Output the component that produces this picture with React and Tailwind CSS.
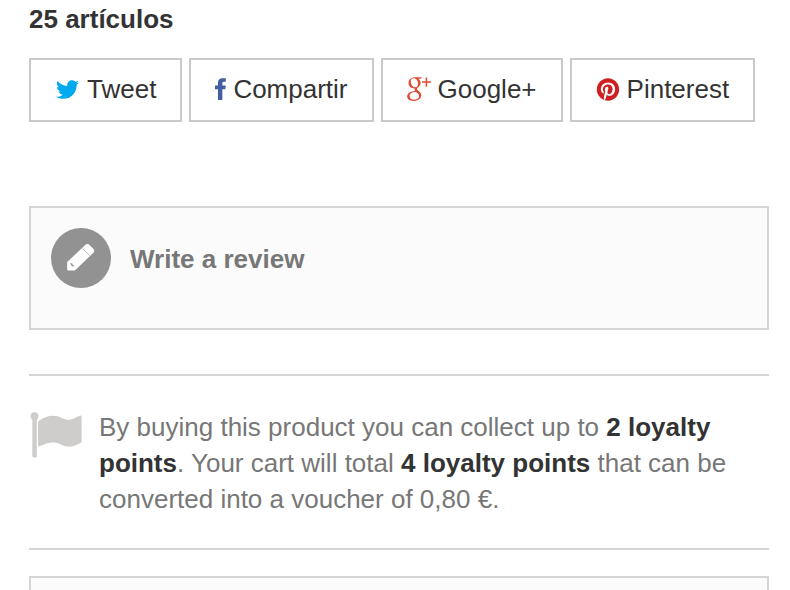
import { FaPinterest, FaTwitter } from 'react-icons/fa'

function FacebookIcon({ className }) {
  return (
    <svg viewBox="0 0 12 24" className={className} fill="currentColor" aria-hidden>
      <path d="M11.8 0.2V4H9.6Q8 4 8 5.6V8.2H11.7L11.3 12.2H8V24H3.2V12.2H0V8.2H3.2V5.4Q3.2 0.2 8.4 0.2Z" />
    </svg>
  )
}

function GooglePlusIcon({ className }) {
  return (
    <svg viewBox="0 0 25 26" className={className} aria-hidden>
      <g fill="currentColor" fillRule="evenodd">
        <path d="M8.4 0.8H15.6L14 2.2H11.8C13.4 3.4 14.2 5 14.2 6.8C14.2 8.8 13.2 10 12 11C10.8 12 10.4 12.4 10.4 13C10.4 13.7 11.2 14.3 12.2 15.1C13.8 16.4 14.8 17.6 14.8 19.4C14.8 22.8 11.6 25.4 6.8 25.4C2.8 25.4 0.2 23.6 0.2 20.8C0.2 17.4 3.6 15.2 8.6 15C8 14.2 7.8 13.4 8.2 12.4C4.4 12.8 1.6 10.2 1.6 6.8C1.6 3.4 4.4 0.8 8.4 0.8ZM7 1.9C5 1.9 3.9 3.4 4 5.8C4.2 8.8 6 11.3 8.4 11.3C10.4 11.3 11.7 9.8 11.6 7.4C11.4 4.2 9.4 1.9 7 1.9ZM9.4 16C5.4 16 2.7 17.6 2.7 20.2C2.7 22.5 4.7 24.1 7.8 24.1C10.8 24.1 12.6 22.6 12.6 20.4C12.6 18.6 11.6 17.6 9.4 16Z" />
        <path d="M19.4 1H21V5H25V6.6H21V10.6H19.4V6.6H15.6V5H19.4Z" />
      </g>
    </svg>
  )
}

function PencilIcon({ className }) {
  return (
    <svg viewBox="0 0 28 28" className={className} aria-hidden>
      <path
        d="M0.2 18L18.8 0.6Q20.4 -0.8 22.2 0.8L26.4 4.8Q28 6.6 26.6 8.6L8.4 26Q8 26.4 7.2 26.4H1Q0.2 26.4 0.2 25.6Z"
        fill="currentColor"
      />
      <path d="M15.6 4.6L22.6 11.6" stroke="#929292" strokeWidth="0.6" />
      <path d="M3.4 19.6L5 20.2L5 21.6L6.8 22.2" fill="none" stroke="#929292" strokeWidth="1.3" />
    </svg>
  )
}

function FlagIcon({ className }) {
  return (
    <svg viewBox="0 0 52 46" className={className} fill="currentColor" aria-hidden>
      <circle cx="4.5" cy="4.2" r="3.9" />
      <rect x="2.3" y="4" width="4.5" height="41.6" rx="1.5" />
      <path d="M8 10.5Q8 9.2 9.2 8.4C17 3.8 24 1.8 33 6.4C39 9.2 42 7.4 49.6 3.8Q51.6 3 51.6 5V29Q51.6 30.4 50.4 31C43 35 38 36 31 32.4C23 28.6 17 31 10 34Q8 34.8 8 33Z" />
    </svg>
  )
}

const redes = [
  { id: 'twitter', label: 'Tweet', icon: <FaTwitter className="h-[23px] w-[25px] text-[#00aaf0]" /> },
  { id: 'facebook', label: 'Compartir', icon: <FacebookIcon className="h-6 w-[11px] overflow-visible text-[#435f9f]" /> },
  { id: 'google', label: 'Google+', icon: <GooglePlusIcon className="h-[26px] w-6 text-[#e04b34]" /> },
  { id: 'pinterest', label: 'Pinterest', icon: <FaPinterest className="h-[23px] w-6 text-[#ce1f21]" /> },
]

export default function App() {
  return (
    <main className="bg-white pr-[21px] pl-[29px] font-['Liberation_Sans',Arial,sans-serif] text-[26px] leading-9 text-[#777777]">
      <p className="pt-px font-bold text-[#333333]">25 artículos</p>

      <div className="mt-[21px] flex flex-wrap gap-[7px]">
        {redes.map((red) => (
          <button
            key={red.id}
            type="button"
            className="flex h-16 items-center gap-[7px] border-2 border-[#c9c9c9] bg-white px-6 pb-0.5 text-[#333333]"
          >
            {red.icon}
            {red.label}
          </button>
        ))}
      </div>

      <section className="mt-21 border-2 border-[#d6d4d4] bg-[#fbfbfb] px-5 pt-5 pb-10">
        <a href="#review" className="flex items-center gap-[19px] font-bold">
          <span className="flex h-15 w-15 shrink-0 items-center justify-center rounded-full bg-[#929292] text-white">
            <PencilIcon className="h-7 w-7" />
          </span>
          <span className="pt-0.5">Write a review</span>
        </a>
      </section>

      <section className="mt-11 flex items-start border-y-2 border-[#d6d4d4] pt-[33px] pb-[31px]">
        <FlagIcon className="mt-[3px] ml-px h-[46px] w-[52px] shrink-0 text-[#cecdcc]" />
        <p className="ml-[17px]">
          By buying this product you can collect up to <b className="text-[#333333]">2 loyalty points</b>. Your cart
          will total <b className="text-[#333333]">4 loyalty points</b> that can be converted into a voucher of 0,80 €.
        </p>
      </section>

      <section className="mt-[26px] border-2 border-b-0 border-[#d6d4d4] bg-[#fbfbfb] pt-3" />
    </main>
  )
}
